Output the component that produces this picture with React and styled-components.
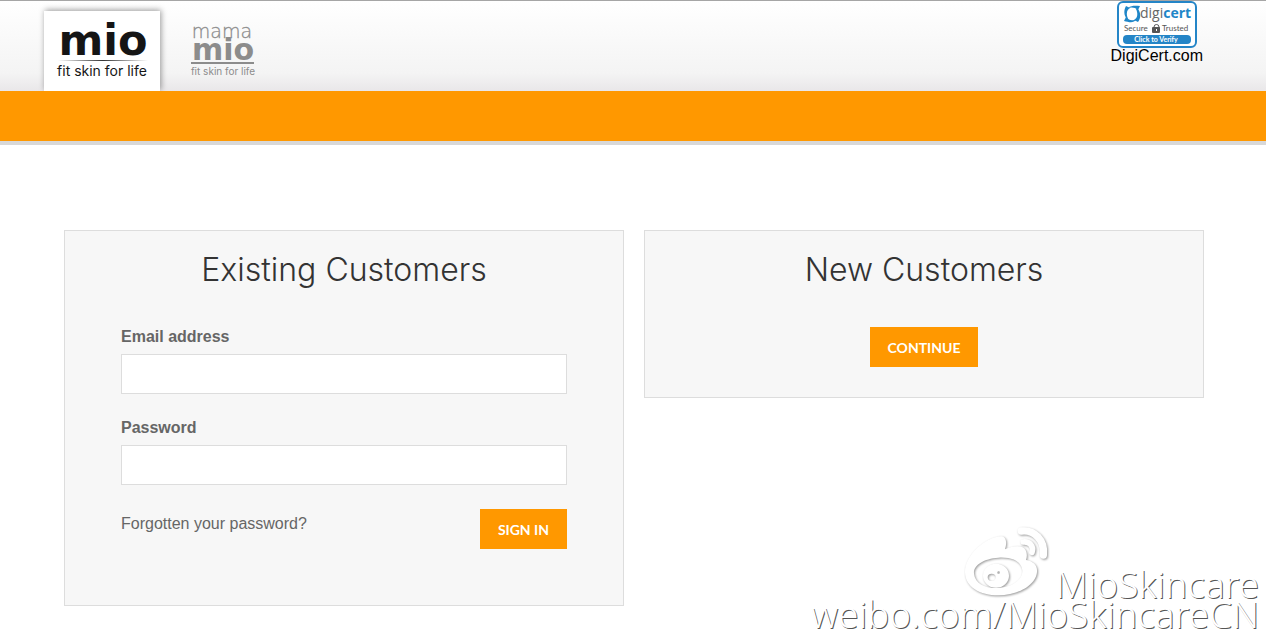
import React, { useState } from 'react';
import styled, { createGlobalStyle } from 'styled-components';

const GlobalStyle = createGlobalStyle`
    * {
        box-sizing: border-box;
    }
    body {
        margin: 0;
        background: #fff;
        color: #666;
        font-family: "Liberation Sans", Arial, sans-serif;
        font-size: 16px;
        line-height: 20px;
    }
`;

const Page = styled.div`
    position: relative;
    min-height: 100vh;
    overflow: hidden;
`;

const Header = styled.header`
    display: flex;
    align-items: flex-start;
    justify-content: space-between;
    height: 91px;
    padding: 0 63px 0 44px;
    border-top: 1px solid #a6a6a6;
    background: linear-gradient(#fff, #f4f4f4 80%, #e9e7e9);
    overflow: hidden;
`;

const Brands = styled.nav`
    display: flex;
    gap: 24px;
    padding-top: 10px;
`;

const BrandLink = styled.a`
    display: block;
    height: 80px;
    background: ${props => props.$active ? '#fff' : 'transparent'};
    box-shadow: ${props => props.$active ? '1px -1px 6px rgba(0, 0, 0, 0.4)' : 'none'};

    svg {
        display: block;
    }
`;

const Seal = styled.a`
    display: flex;
    flex-direction: column;
    align-items: center;
    color: #000;
    line-height: 16px;
    text-decoration: none;
`;

const NavBar = styled.div`
    height: 54px;
    background: #ff9800;
    border-bottom: 4px solid #d8d8d8;
`;

const Main = styled.main`
    display: grid;
    grid-template-columns: repeat(auto-fit, minmax(400px, 1fr));
    align-items: start;
    gap: 20px;
    padding: 85px 62px 33px 64px;
`;

const Panel = styled.section`
    padding: 19px 56px ${props => props.$tall ? '56px' : '30px'};
    border: 1px solid #ddd;
    background: #f7f7f7;
    text-align: center;
`;

const Title = styled.h2`
    margin: 0 0 37px;
    color: #333;
    font-family: Inter, "Open Sans", sans-serif;
    font-size: 32px;
    font-weight: 300;
    line-height: 40px;
`;

const Form = styled.form`
    text-align: left;
`;

const Field = styled.div`
    margin-bottom: 24px;
`;

const Label = styled.label`
    display: block;
    margin-bottom: 7px;
    font-weight: bold;
`;

const Input = styled.input`
    display: block;
    width: 100%;
    height: 40px;
    padding: 0 10px;
    border: 1px solid #ddd;
    border-radius: 0;
    background: #fff;
    color: #333;
    font: inherit;
`;

const Actions = styled.div`
    display: flex;
    align-items: flex-start;
    justify-content: space-between;
`;

const TextLink = styled.a`
    padding-top: 5px;
    color: #666;
    text-decoration: none;
`;

const Button = styled.button`
    height: 40px;
    padding: 0 18px;
    border: 0;
    background: #ff9800;
    color: #fff;
    font-family: Lato, sans-serif;
    font-size: 14px;
    font-weight: 700;
    cursor: pointer;
`;

const Watermark = styled.div`
    position: absolute;
    right: 7px;
    bottom: 10px;
    display: flex;
    flex-direction: column;
    align-items: flex-end;
    color: #fff;
    font-family: "Noto Sans", sans-serif;
    font-size: 37px;
    font-weight: 300;
    line-height: 30px;
    text-shadow: 1px 1px 0 #555;
    pointer-events: none;
`;

const WatermarkTop = styled.div`
    display: flex;
    align-items: flex-end;
`;

const WeiboIcon = styled.svg`
    margin-bottom: 2px;
    filter: drop-shadow(1px 1px 1px rgba(0, 0, 0, 0.4));
`;

const MioLogo = () => (
    <svg width="116" height="80" viewBox="0 0 116 80" role="img" aria-label="mio fit skin for life">
        <defs>
            <linearGradient id="rule">
                <stop offset="0" stopColor="#fff" />
                <stop offset="0.5" stopColor="#333" />
                <stop offset="1" stopColor="#fff" />
            </linearGradient>
        </defs>
        <text x="59" y="44" textAnchor="middle" fill="#151515" fontFamily="DejaVu Sans, sans-serif" fontWeight="700" fontSize="43">mio</text>
        <rect x="14" y="49" width="90" height="1" fill="url(#rule)" />
        <text x="58" y="65" textAnchor="middle" fill="#151515" fontFamily="Inter, sans-serif" fontSize="14">fit skin for life</text>
    </svg>
);

const MamaMioLogo = () => (
    <svg width="78" height="80" viewBox="0 0 78 80" role="img" aria-label="mama mio fit skin for life">
        <g fill="#8c8c8c" textAnchor="middle">
            <text x="38" y="27" fontFamily="DejaVu Sans, sans-serif" fontSize="19" fontWeight="200" stroke="#8c8c8c" strokeWidth="0.3">mama</text>
            <text x="39" y="49" fontFamily="DejaVu Sans, sans-serif" fontSize="30" fontWeight="700">mio</text>
            <rect x="7" y="51" width="63" height="2" />
            <text x="39" y="64" fontFamily="Inter, sans-serif" fontSize="10">fit skin for life</text>
        </g>
    </svg>
);

const DigicertBadge = () => (
    <svg width="80" height="47" viewBox="0 0 80 47" aria-hidden="true">
        <rect x="1" y="1" width="78" height="45" rx="5" fill="#fff" stroke="#2485c7" strokeWidth="2" />
        <g fill="#1f86c8">
            <path d="M9 5 L13 7 C9 9 9 15 12 19 C7 17 6 10 9 5 Z" />
            <path d="M11 7 C15 4 19 5 23 5 L21 9 C18 6 14 6 11 7 Z" />
            <path d="M21 8 C24 12 24 17 21 21 L17 19 C21 17 21 12 19 8 Z" />
            <path d="M7 20 L9 16 C12 20 16 20 20 18 C16 23 12 21 7 20 Z" />
        </g>
        <text x="23" y="17" fontFamily="Open Sans, sans-serif" fontSize="14" fill="#666">digi<tspan fill="#1f86c8" fontWeight="700">cert</tspan></text>
        <g fontFamily="Lato, sans-serif" fontSize="8" fill="#555">
            <text x="7" y="30">Secure</text>
            <text x="45" y="30">Trusted</text>
        </g>
        <path d="M37 27 V26 a2 2 0 0 1 5 0 V27" fill="none" stroke="#555" strokeWidth="1" />
        <rect x="35" y="26" width="8" height="6" rx="1" fill="#555" />
        <rect x="39" y="28" width="1" height="2" fill="#fff" />
        <rect x="6" y="34" width="68" height="9" rx="4" fill="#2485c7" />
        <text x="39" y="41" textAnchor="middle" fontFamily="Lato, sans-serif" fontSize="7" fontWeight="700" fill="#fff">Click to Verify</text>
    </svg>
);

const App = () => {
    const [email, setEmail] = useState('');
    const [password, setPassword] = useState('');

    const handleEmailChange = (event) => setEmail(event.target.value);
    const handlePasswordChange = (event) => setPassword(event.target.value);
    const handleSubmit = (event) => event.preventDefault();

    return (
        <Page>
            <GlobalStyle />
            <Header>
                <Brands>
                    <BrandLink href="#mio" $active><MioLogo /></BrandLink>
                    <BrandLink href="#mama-mio"><MamaMioLogo /></BrandLink>
                </Brands>
                <Seal href="#digicert">
                    <DigicertBadge />
                    DigiCert.com
                </Seal>
            </Header>
            <NavBar />
            <Main>
                <Panel $tall>
                    <Title>Existing Customers</Title>
                    <Form onSubmit={handleSubmit}>
                        <Field>
                            <Label htmlFor="email">Email address</Label>
                            <Input id="email" type="email" value={email} onChange={handleEmailChange} />
                        </Field>
                        <Field>
                            <Label htmlFor="password">Password</Label>
                            <Input id="password" type="password" value={password} onChange={handlePasswordChange} />
                        </Field>
                        <Actions>
                            <TextLink href="#forgotten">Forgotten your password?</TextLink>
                            <Button type="submit">SIGN IN</Button>
                        </Actions>
                    </Form>
                </Panel>
                <Panel>
                    <Title>New Customers</Title>
                    <Button type="button">CONTINUE</Button>
                </Panel>
            </Main>
            <Watermark>
                <WatermarkTop>
                    <WeiboIcon width="100" height="75" viewBox="20 20 300 225" aria-hidden="true">
                        <path
                            fill="#fff"
                            fillRule="evenodd"
                            d="M50 170 C50 120 110 65 160 63 C175 65 176 85 170 102 C195 90 225 88 232 105 C237 115 236 125 233 134 C255 138 268 150 266 170 C262 212 205 240 150 240 C95 240 50 215 50 170 Z M77 175 C80 205 112 220 150 218 C195 215 224 190 222 165 C220 138 190 124 150 127 C105 130 74 150 77 175 Z"
                        />
                        <path
                            fill="#fff"
                            fillRule="evenodd"
                            d="M104 181 a39 36 0 1 0 78 0 a39 36 0 1 0 -78 0 Z M118 186 a12 11 0 1 0 24 0 a12 11 0 1 0 -24 0 Z M147 172 a4 4 0 1 0 8 0 a4 4 0 1 0 -8 0 Z"
                        />
                        <g fill="none" stroke="#fff" strokeLinecap="round">
                            <path strokeWidth="22" d="M219 47 C258 42 290 75 285 119" />
                            <path strokeWidth="17" d="M225 80 C244 78 257 92 251 111" />
                        </g>
                    </WeiboIcon>
                    MioSkincare
                </WatermarkTop>
                <div>weibo.com/MioSkincareCN</div>
            </Watermark>
        </Page>
    );
};

export default App;
